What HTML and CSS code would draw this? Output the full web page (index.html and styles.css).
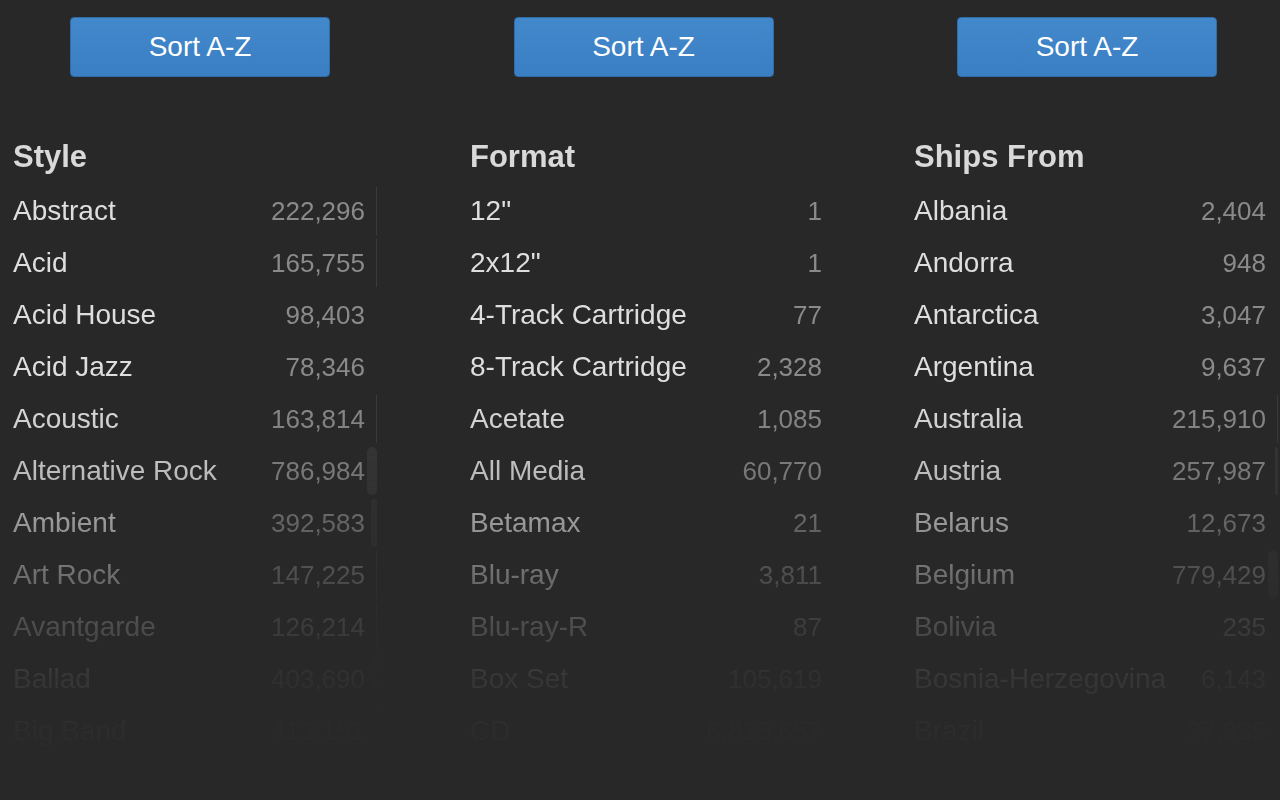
FILE: index.html
```html
<!DOCTYPE html>
<html lang="en">
<head>
<meta charset="utf-8">
<title>Browse facets</title>
<link rel="stylesheet" href="styles.css">
</head>
<body>
  <div class="toolbar">
    <button class="sort-btn" type="button">Sort A-Z</button>
    <button class="sort-btn" type="button">Sort A-Z</button>
    <button class="sort-btn" type="button">Sort A-Z</button>
  </div>

  <div class="facets">
    <section class="facet">
      <h2 class="facet-title">Style</h2>
      <ul class="facet-list">
        <li class="row"><span class="name">Abstract</span><span class="count">222,296</span><span class="rail"><i class="bar bar-thin"></i></span></li>
        <li class="row"><span class="name">Acid</span><span class="count">165,755</span><span class="rail"><i class="bar bar-thin"></i></span></li>
        <li class="row"><span class="name">Acid House</span><span class="count">98,403</span><span class="rail"></span></li>
        <li class="row"><span class="name">Acid Jazz</span><span class="count">78,346</span><span class="rail"></span></li>
        <li class="row"><span class="name">Acoustic</span><span class="count">163,814</span><span class="rail"><i class="bar bar-thin"></i></span></li>
        <li class="row"><span class="name">Alternative Rock</span><span class="count">786,984</span><span class="rail"><i class="bar bar-wide"></i></span></li>
        <li class="row"><span class="name">Ambient</span><span class="count">392,583</span><span class="rail"><i class="bar bar-mid"></i></span></li>
        <li class="row"><span class="name">Art Rock</span><span class="count">147,225</span><span class="rail"><i class="bar bar-thin"></i></span></li>
        <li class="row"><span class="name">Avantgarde</span><span class="count">126,214</span><span class="rail"><i class="bar bar-thin"></i></span></li>
        <li class="row"><span class="name">Ballad</span><span class="count">403,690</span><span class="rail"><i class="bar bar-mid"></i></span></li>
        <li class="row"><span class="name">Big Band</span><span class="count">113,151</span><span class="rail"><i class="bar bar-thin"></i></span></li>
      </ul>
    </section>

    <section class="facet">
      <h2 class="facet-title">Format</h2>
      <ul class="facet-list">
        <li class="row"><span class="name">12"</span><span class="count">1</span><span class="rail"></span></li>
        <li class="row"><span class="name">2x12"</span><span class="count">1</span><span class="rail"></span></li>
        <li class="row"><span class="name">4-Track Cartridge</span><span class="count">77</span><span class="rail"></span></li>
        <li class="row"><span class="name">8-Track Cartridge</span><span class="count">2,328</span><span class="rail"></span></li>
        <li class="row"><span class="name">Acetate</span><span class="count">1,085</span><span class="rail"></span></li>
        <li class="row"><span class="name">All Media</span><span class="count">60,770</span><span class="rail"></span></li>
        <li class="row"><span class="name">Betamax</span><span class="count">21</span><span class="rail"></span></li>
        <li class="row"><span class="name">Blu-ray</span><span class="count">3,811</span><span class="rail"></span></li>
        <li class="row"><span class="name">Blu-ray-R</span><span class="count">87</span><span class="rail"></span></li>
        <li class="row"><span class="name">Box Set</span><span class="count">105,619</span><span class="rail"></span></li>
        <li class="row"><span class="name">CD</span><span class="count">6,815,657</span><span class="rail"></span></li>
      </ul>
    </section>

    <section class="facet">
      <h2 class="facet-title">Ships From</h2>
      <ul class="facet-list">
        <li class="row"><span class="name">Albania</span><span class="count">2,404</span><span class="rail"></span></li>
        <li class="row"><span class="name">Andorra</span><span class="count">948</span><span class="rail"></span></li>
        <li class="row"><span class="name">Antarctica</span><span class="count">3,047</span><span class="rail"></span></li>
        <li class="row"><span class="name">Argentina</span><span class="count">9,637</span><span class="rail"></span></li>
        <li class="row"><span class="name">Australia</span><span class="count">215,910</span><span class="rail"><i class="bar bar-thin"></i></span></li>
        <li class="row"><span class="name">Austria</span><span class="count">257,987</span><span class="rail"><i class="bar bar-slim"></i></span></li>
        <li class="row"><span class="name">Belarus</span><span class="count">12,673</span><span class="rail"></span></li>
        <li class="row"><span class="name">Belgium</span><span class="count">779,429</span><span class="rail"><i class="bar bar-wide"></i></span></li>
        <li class="row"><span class="name">Bolivia</span><span class="count">235</span><span class="rail"></span></li>
        <li class="row"><span class="name">Bosnia-Herzegovina</span><span class="count">6,143</span><span class="rail"></span></li>
        <li class="row"><span class="name">Brazil</span><span class="count">37,935</span><span class="rail"></span></li>
      </ul>
    </section>
  </div>
</body>
</html>
```

FILE: styles.css
```css
html, body {
  margin: 0;
  padding: 0;
  background: #282828;
  height: 100%;
  overflow: hidden;
}

body {
  font-family: "Liberation Sans", Arial, Helvetica, sans-serif;
  color: #dedede;
}

/* Sort buttons row */
.toolbar {
  display: flex;
  gap: 183.5px;
  padding: 17px 0 0 70px;
  height: 113px;
}

.sort-btn {
  width: 260px;
  height: 60px;
  border: 1px solid #2f6ca8;
  border-radius: 4px;
  background: linear-gradient(to bottom, #4289cb, #3a7ec3);
  color: #ffffff;
  font-family: inherit;
  font-size: 28px;
  line-height: 1;
  padding: 0;
  cursor: pointer;
}

/* Facet columns, fading out toward the bottom */
.facets {
  display: grid;
  grid-template-columns: 457px 444px 364px;
  padding-left: 13px;
  -webkit-mask-image: linear-gradient(to bottom,
    rgba(0,0,0,1) 0,
    rgba(0,0,0,1) 262px,
    rgba(0,0,0,.82) 341px,
    rgba(0,0,0,.62) 393px,
    rgba(0,0,0,.39) 445px,
    rgba(0,0,0,.2) 497px,
    rgba(0,0,0,.08) 549px,
    rgba(0,0,0,.025) 601px,
    rgba(0,0,0,0) 650px);
  mask-image: linear-gradient(to bottom,
    rgba(0,0,0,1) 0,
    rgba(0,0,0,1) 262px,
    rgba(0,0,0,.82) 341px,
    rgba(0,0,0,.62) 393px,
    rgba(0,0,0,.39) 445px,
    rgba(0,0,0,.2) 497px,
    rgba(0,0,0,.08) 549px,
    rgba(0,0,0,.025) 601px,
    rgba(0,0,0,0) 650px);
}

.facet {
  width: 364px;
}

.facet-title {
  margin: 0 0 3px;
  height: 54px;
  line-height: 54px;
  font-size: 31px;
  font-weight: bold;
  color: #d9d9d9;
}

.facet-list {
  list-style: none;
  margin: 0;
  padding: 0;
  display: flex;
  flex-direction: column;
  gap: 4px;
}

.row {
  display: flex;
  align-items: center;
  height: 48px;
}

.name {
  flex: 1;
  font-size: 28px;
  color: #dedede;
  white-space: nowrap;
}

.count {
  font-size: 26px;
  color: #8a8a8a;
  text-align: right;
}

/* Per-row scroll rail on the right edge */
.rail {
  width: 12px;
  height: 48px;
  display: flex;
  justify-content: flex-end;
  flex-shrink: 0;
}

.bar {
  display: block;
  height: 48px;
}

.bar-thin {
  width: 1px;
  background: #3b3b3b;
}

.bar-slim {
  width: 3px;
  border-radius: 2px;
  background: #353535;
}

.bar-mid {
  width: 6px;
  border-radius: 3px;
  background: #333333;
}

.bar-wide {
  width: 10px;
  border-radius: 5px;
  background: #363636;
}
```
